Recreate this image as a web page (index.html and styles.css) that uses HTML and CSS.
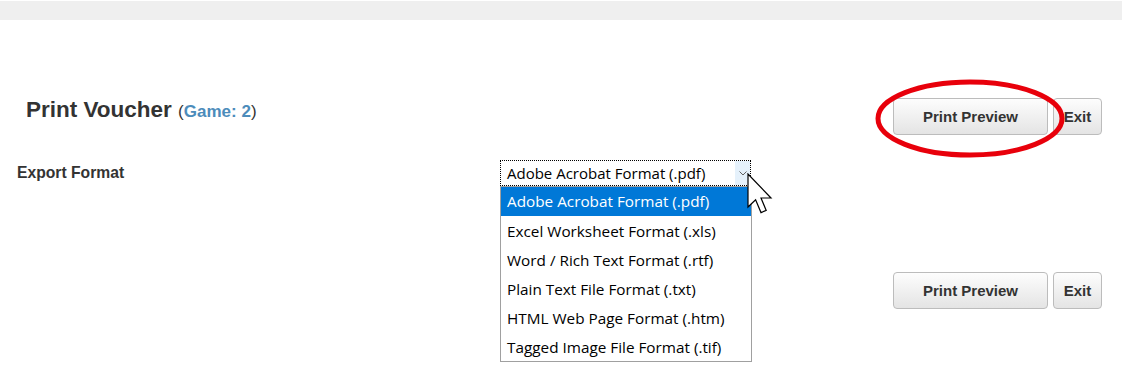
FILE: index.html
```html
<!DOCTYPE html>
<html lang="en">
<head>
  <meta charset="UTF-8">
  <meta name="viewport" content="width=device-width, initial-scale=1.0">
  <title>Print Voucher</title>
  <link rel="stylesheet" href="styles.css">
</head>
<body>
  <div class="topbar"></div>

  <div class="page">
    <div class="header">
      <h1 class="title">Print Voucher <span class="sub">(<b>Game: 2</b>)</span></h1>
      <div class="actions">
        <button class="btn btn-preview">Print Preview</button>
        <button class="btn btn-exit">Exit</button>
      </div>
    </div>

    <div class="form-row">
      <label class="label">Export Format</label>
      <div class="select-wrap">
        <div class="select">
          <span class="select-value">Adobe Acrobat Format (.pdf)</span>
          <span class="select-arrow">
            <svg width="8" height="5" viewBox="0 0 8 5"><path d="M0.5 0.5 L4 4 L7.5 0.5" fill="none" stroke="#606060" stroke-width="1"/></svg>
          </span>
        </div>
        <ul class="options">
          <li class="selected">Adobe Acrobat Format (.pdf)</li>
          <li>Excel Worksheet Format (.xls)</li>
          <li>Word / Rich Text Format (.rtf)</li>
          <li>Plain Text File Format (.txt)</li>
          <li>HTML Web Page Format (.htm)</li>
          <li>Tagged Image File Format (.tif)</li>
        </ul>
      </div>
    </div>

    <div class="footer">
      <button class="btn btn-preview">Print Preview</button>
      <button class="btn btn-exit">Exit</button>
    </div>
  </div>

  <!-- annotation overlays -->
  <svg class="ring" width="192" height="80" viewBox="0 0 192 80">
    <ellipse cx="96" cy="39.5" rx="92" ry="36.5" fill="none" stroke="#e8000b" stroke-width="5"/>
  </svg>
  <svg class="cursor" width="26" height="42" viewBox="0 0 13 21">
    <path d="M0.5 0.5 V17 L4.3 13.4 L7 19.8 L9.6 18.7 L7 12.5 H12 Z" fill="#fff" stroke="#000" stroke-width="0.6" stroke-linejoin="miter"/>
  </svg>
</body>
</html>
```

FILE: styles.css
```css
html,
body {
  min-height: 100vh;
}

body {
  margin: 0;
  padding: 0;
  font-family: 'Liberation Sans', Arial, sans-serif;
  color: #333;
  background: #fff;
  position: relative;
}

.topbar {
  height: 19px;
  margin-top: 1px;
  background: #efefef;
}

.page {
  padding: 0 20px 0 17px;
}

.header {
  display: flex;
  justify-content: space-between;
  align-items: flex-start;
  margin-top: 78px;
}

.title {
  margin: 0;
  padding-left: 9px;
  font-size: 22.5px;
  line-height: 24px;
  font-weight: bold;
  color: #333;
}

.title .sub {
  font-size: 17px;
  font-weight: normal;
  color: #333;
}

.title .sub b {
  color: #4c8cbb;
}

.actions,
.footer {
  display: flex;
  gap: 5px;
}

.btn {
  height: 37px;
  border: 1px solid #bcbcbc;
  border-radius: 4px;
  background: linear-gradient(to bottom, #fdfdfd, #e4e4e4);
  font-family: 'Liberation Sans', Arial, sans-serif;
  font-size: 15px;
  font-weight: bold;
  color: #333;
  padding: 0;
  cursor: pointer;
}

.btn-preview {
  width: 155px;
}

.btn-exit {
  width: 49px;
}

.form-row {
  display: flex;
  align-items: center;
  margin-top: 25px;
}

.label {
  width: 483px;
  font-size: 15.7px;
  line-height: 20px;
  font-weight: bold;
  color: #333;
}

.select-wrap {
  position: relative;
  width: 251px;
}

.select {
  display: flex;
  height: 24px;
  border: 1px dotted #000;
  background: #fff;
  font-family: 'Open Sans', 'Noto Sans', sans-serif;
  font-size: 15px;
  color: #000;
}

.select-value {
  flex: 1;
  padding-left: 6px;
  line-height: 24px;
}

.select-arrow {
  width: 15px;
  background: #e5f1fb;
  display: flex;
  align-items: center;
  justify-content: center;
}

.options {
  position: absolute;
  top: 26px;
  left: 0;
  z-index: 2;
  width: 250px;
  margin: 0;
  padding: 0;
  list-style: none;
  border: 1px solid #a0a0a0;
  background: #fff;
  font-family: 'Open Sans', 'Noto Sans', sans-serif;
  font-size: 15.3px;
  color: #000;
}

.options li {
  height: 29px;
  line-height: 31px;
  padding-left: 6px;
}

.options li.selected {
  background: #0078d7;
  color: #fff;
  line-height: 29px;
}

.footer {
  justify-content: flex-end;
  margin-top: 86px;
}

.ring {
  position: absolute;
  left: 874px;
  top: 79px;
}

.cursor {
  position: absolute;
  left: 747px;
  top: 173px;
  z-index: 3;
}
```
